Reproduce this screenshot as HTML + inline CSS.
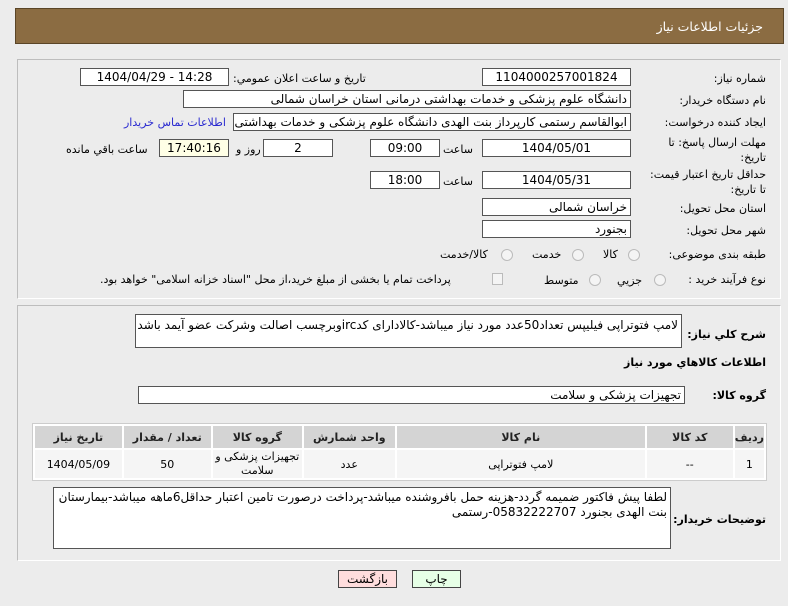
<!DOCTYPE html>
<html><head><meta charset="utf-8"><style>
*{margin:0;padding:0;box-sizing:border-box}
body{width:788px;height:606px;background:#ececec;font-family:"DejaVu Sans","Liberation Sans",sans-serif;font-size:11px;color:#000;position:relative;overflow:hidden}
.a{position:absolute;white-space:nowrap}
.hdr{left:15px;top:8px;width:769px;height:36px;background:#8b6c42;border:1px solid #5a4527}
.hdr span{position:absolute;right:20px;top:10px;color:#fff;font-size:12.5px}
.pan{border:1px solid #bdbdbd;border-right-color:#fff;border-bottom-color:#fff;left:17px;width:764px;background:#ececec}
.box{position:absolute;background:#fff;border:1px solid #555;height:18px;text-align:center;line-height:16px;font-size:12px;overflow:hidden;white-space:nowrap}
.r{text-align:right;padding-right:3px}
.lb{position:absolute;right:22px;white-space:nowrap;direction:rtl}
.rad{position:absolute;width:12px;height:12px;border:1px solid #bbb;border-radius:50%;background:#f4f4f4}
table{border-collapse:separate;border-spacing:2px;position:absolute;left:32px;top:423px;width:735px;background:#fff;border:1px solid #ccc}
th{background:#d4d4d4;height:22px;font-size:11px;font-weight:bold;color:#222}
td{background:#f5f5f5;height:28px;text-align:center;font-size:11px}
.btn{position:absolute;height:18px;border:1px solid #444;text-align:center;line-height:16px;font-size:12px}
</style></head><body dir="ltr">
<div class="a hdr"><span>جزئیات اطلاعات نیاز</span></div>
<div class="a pan" style="top:59px;height:240px"></div>
<div class="a pan" style="top:305px;height:256px"></div>

<div class="lb" style="top:72px">شماره نیاز:</div>
<div class="box" style="left:482px;top:68px;width:149px">1104000257001824</div>
<div class="a" style="left:233px;top:72px;direction:rtl">تاریخ و ساعت اعلان عمومي:</div>
<div class="box" style="left:80px;top:68px;width:149px">1404/04/29 - 14:28</div>

<div class="lb" style="top:94px">نام دستگاه خریدار:</div>
<div class="box r" style="left:183px;top:90px;width:448px;direction:rtl">دانشگاه علوم پزشکی و خدمات بهداشتی درمانی استان خراسان شمالی</div>

<div class="lb" style="top:116px">ایجاد کننده درخواست:</div>
<div class="box r" style="left:233px;top:113px;width:398px;direction:rtl">ابوالقاسم رستمی کارپرداز بنت الهدی دانشگاه علوم پزشکی و خدمات بهداشتی</div>
<div class="a" style="left:124px;top:116px;color:#2a2ad0;direction:rtl">اطلاعات تماس خریدار</div>

<div class="lb" style="top:136px">مهلت ارسال پاسخ: تا</div>
<div class="lb" style="top:151px">تاریخ:</div>
<div class="box" style="left:482px;top:139px;width:149px">1404/05/01</div>
<div class="a" style="left:443px;top:143px">ساعت</div>
<div class="box" style="left:370px;top:139px;width:70px">09:00</div>
<div class="box" style="left:263px;top:139px;width:70px">2</div>
<div class="a" style="left:236px;top:143px;direction:rtl">روز و</div>
<div class="box" style="left:159px;top:139px;width:70px;background:#ffffe6">17:40:16</div>
<div class="a" style="left:66px;top:143px;direction:rtl">ساعت باقي مانده</div>

<div class="lb" style="top:168px">حداقل تاریخ اعتبار قیمت:</div>
<div class="lb" style="top:183px">تا تاریخ:</div>
<div class="box" style="left:482px;top:171px;width:149px">1404/05/31</div>
<div class="a" style="left:443px;top:175px">ساعت</div>
<div class="box" style="left:370px;top:171px;width:70px">18:00</div>

<div class="lb" style="top:202px">استان محل تحویل:</div>
<div class="box r" style="left:482px;top:198px;width:149px;direction:rtl">خراسان شمالی</div>
<div class="lb" style="top:224px">شهر محل تحویل:</div>
<div class="box r" style="left:482px;top:220px;width:149px;direction:rtl">بجنورد</div>

<div class="lb" style="top:248px">طبقه بندی موضوعی:</div>
<div class="rad" style="left:628px;top:249px"></div><div class="a" style="left:603px;top:248px">کالا</div>
<div class="rad" style="left:572px;top:249px"></div><div class="a" style="left:532px;top:248px">خدمت</div>
<div class="rad" style="left:501px;top:249px"></div><div class="a" style="left:440px;top:248px;direction:rtl">کالا/خدمت</div>

<div class="lb" style="top:273px">نوع فرآیند خرید :</div>
<div class="rad" style="left:654px;top:274px"></div><div class="a" style="left:617px;top:274px">جزیي</div>
<div class="rad" style="left:589px;top:274px"></div><div class="a" style="left:544px;top:274px">متوسط</div>
<div class="a" style="left:492px;top:273px;width:11px;height:12px;border:1px solid #bbb;background:#f4f4f4"></div>
<div class="a" style="left:100px;top:273px;direction:rtl">پرداخت تمام یا بخشی از مبلغ خرید،از محل "اسناد خزانه اسلامی" خواهد بود.</div>

<div class="lb" style="top:328px;font-weight:bold">شرح کلي نیاز:</div>
<div class="box r" style="left:135px;top:314px;width:547px;height:34px;text-align:right;direction:rtl;line-height:16px;padding-top:2px">لامپ فتوتراپی فیلیپس تعداد50عدد مورد نیاز میباشد-کالادارای کدircوبرچسب اصالت وشرکت عضو آیمد باشد</div>
<div class="lb" style="top:356px;font-weight:bold">اطلاعات کالاهاي مورد نیاز</div>
<div class="lb" style="top:389px;font-weight:bold">گروه کالا:</div>
<div class="box r" style="left:138px;top:386px;width:547px;direction:rtl">تجهیزات پزشکی و سلامت</div>

<table dir="rtl">
<tr><th style="width:27px">ردیف</th><th style="width:86px">کد کالا</th><th style="width:248px">نام کالا</th><th style="width:91px">واحد شمارش</th><th style="width:89px">گروه کالا</th><th style="width:87px">تعداد / مقدار</th><th>تاریخ نیاز</th></tr>
<tr><td>1</td><td>--</td><td>لامپ فتوتراپی</td><td>عدد</td><td style="line-height:14px">تجهیزات پزشکی و سلامت</td><td>50</td><td>1404/05/09</td></tr>
</table>

<div class="lb" style="top:513px;font-weight:bold">توضیحات خریدار:</div>
<div class="box" style="left:53px;top:487px;width:618px;height:62px;text-align:right;direction:rtl;white-space:normal;padding:2px 3px;line-height:15px">لطفا پیش فاکتور ضمیمه گردد-هزینه حمل بافروشنده میباشد-پرداخت درصورت تامین اعتبار حداقل6ماهه میباشد-بیمارستان بنت الهدی بجنورد 05832222707-رستمی</div>

<div class="btn" style="left:338px;top:570px;width:59px;background:#fdd">بازگشت</div>
<div class="btn" style="left:412px;top:570px;width:49px;background:#e6ffe6">چاپ</div>
</body></html>
